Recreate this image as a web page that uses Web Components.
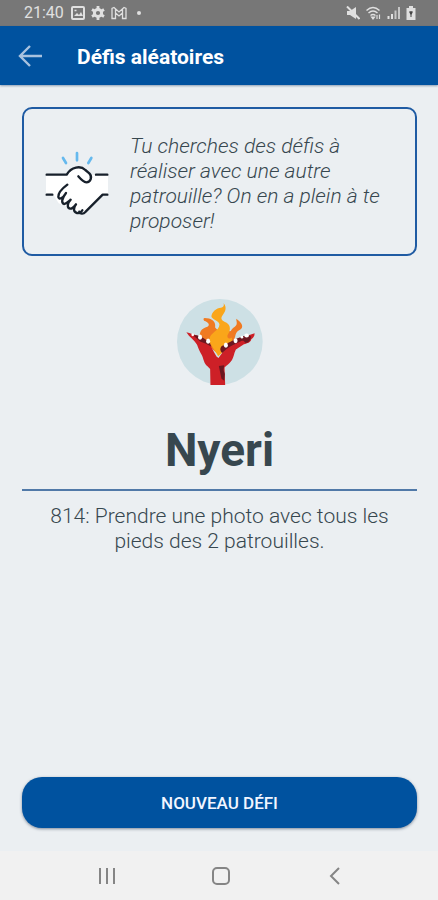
<!DOCTYPE html>
<html lang="fr">
<head>
<meta charset="utf-8">
<meta name="viewport" content="width=device-width, initial-scale=1">
<title>Défis aléatoires</title>
<style>
  body {
    margin: 0;
    font-family: Roboto, "Liberation Sans", sans-serif;
    --blue: #00529f;
    --page: #ebeff2;
    --ink: #37474f;
  }
</style>
</head>
<body>
<challenge-app></challenge-app>

<script>
class StatusBar extends HTMLElement {
  constructor() {
    super();
    this.attachShadow({ mode: "open" });
  }

  connectedCallback() {
    this.shadowRoot.innerHTML = `
      <style>
        :host {
          display: flex;
          justify-content: space-between;
          align-items: center;
          height: 26px;
          padding: 0 22px 0 24px;
          background: #777;
          color: #e0e0e0;
        }

        div {
          display: flex;
          align-items: center;
          gap: 6px;
        }

        time {
          font-size: 16px;
          line-height: 20px;
          margin-right: 1px;
        }

        svg {
          display: block;
        }
      </style>
      <div>
        <time>${this.getAttribute("time")}</time>
        <svg width="14" height="14" viewBox="0 0 14 14" fill="none" stroke="currentColor" stroke-width="2">
          <rect x="1" y="1" width="12" height="12" rx="1"/>
          <path d="M3 10l3-3 2 2 2-3 2 4z" fill="currentColor" stroke="none"/>
          <path d="M3.500 4.500h2" stroke-width="1.500"/>
        </svg>
        <svg width="14" height="14" viewBox="0 0 14 14" fill="none" stroke="currentColor">
          <circle cx="7" cy="7" r="3.600" stroke-width="3"/>
          <path d="M7 0v3M7 11v3M1 3.500l2.500 1.500M10.500 9l2.500 1.500M1 10.500L3.500 9M10.500 5L13 3.500" stroke-width="2.800"/>
        </svg>
        <svg width="16" height="14" viewBox="0 0 16 14" fill="none" stroke="currentColor" stroke-width="1.300">
          <path d="M1 12.500V2.500l2-1 5 4.500 5-4.500 2 1v10h-3.500V7L8 10 4.500 7v5.500zM4.500 7V3M11.500 7V3"/>
        </svg>
        <svg width="12" height="14" viewBox="0 0 12 14" fill="currentColor"><circle cx="6" cy="7" r="2"/></svg>
      </div>
      <div>
        <svg width="14" height="14" viewBox="0 0 14 14" fill="currentColor">
          <path d="M1 5h3l6-4v12l-6-4H1z"/>
          <path d="M1 .5l12.500 12.500" stroke="currentColor" stroke-width="2"/>
        </svg>
        <svg width="15" height="14" viewBox="0 0 15 14" fill="none" stroke="currentColor" stroke-width="1.500">
          <path d="M.5 4.500q6.500-6 13 0M2.500 7q4.500-4 9 0M4.500 9.500q2.500-2 5 0"/>
          <path d="M5.500 11L7 13l1.500-2zM11 13V9M13.500 8.500V13" fill="currentColor" stroke-width="1.200"/>
        </svg>
        <svg width="13" height="14" viewBox="0 0 13 14" fill="none" stroke="currentColor" stroke-width="2">
          <path d="M1.500 13v-3M5 13V8" />
          <path d="M8.500 13V4.500M12 13V1" opacity=".75"/>
        </svg>
        <svg width="10" height="14" viewBox="0 0 10 14">
          <path d="M3 0h4v2h2.500v12H.5V2H3z" fill="currentColor"/>
          <path d="M3 5.500h4L5 10zM4.500 5h1v6h-1z" fill="#444"/>
        </svg>
      </div>
    `;
  }
}

class AppBar extends HTMLElement {
  constructor() {
    super();
    this.attachShadow({ mode: "open" });
  }

  connectedCallback() {
    this.shadowRoot.innerHTML = `
      <style>
        :host {
          display: flex;
          align-items: center;
          gap: 32px;
          height: 59px;
          padding: 0 16px;
          background: var(--blue);
          color: #fff;
          box-shadow: 0 1px 2px rgba(0, 40, 90, 0.4);
        }

        button {
          padding: 0;
          border: 0;
          background: none;
          color: #a8c2df;
        }

        svg {
          display: block;
        }

        h1 {
          margin: 0;
          padding-top: 2px;
          font-size: 21px;
          line-height: 28px;
          font-weight: 700;
        }
      </style>
      <button type="button" aria-label="Retour">
        <svg width="29" height="26" viewBox="0 0 29 26" fill="none" stroke="currentColor" stroke-width="2.400">
          <path d="M26 13H4M14 3L4 13l10 10"/>
        </svg>
      </button>
      <h1><slot></slot></h1>
    `;
  }
}

class IntroCard extends HTMLElement {
  constructor() {
    super();
    this.attachShadow({ mode: "open" });
  }

  connectedCallback() {
    this.shadowRoot.innerHTML = `
      <style>
        :host {
          display: flex;
          align-items: center;
          gap: 21px;
          padding: 25px 21px 20px;
          border: 2px solid #1f5ba3;
          border-radius: 10px;
          color: var(--ink);
        }

        svg {
          flex: none;
        }

        p {
          flex: 1;
          margin: 0;
          font-size: 21px;
          line-height: 25px;
          font-style: italic;
          font-weight: 300;
        }
      </style>
      <svg width="64" height="66" viewBox="15 27 192 198" fill="none" stroke-width="7" stroke-linecap="round" aria-hidden="true">
        <path d="M18 98h64q28-42 62-8l10 8h50v60h-18l-56 56-74-30-16-26H18z" fill="#fff"/>
        <g stroke="#17202b" stroke-linejoin="round">
          <path d="M20 98h60c14-24 42-28 56-14l12 10c10 10 4 27-9 27-9-1-16-9-24-18"/>
          <path d="M168 98h34M20 158h17M202 158h-14l-51 51c-8 9-16 7-19 0"/>
          <path d="M82 128c-16 12-28 26-27 37 2 8 12 6 23-12-14 18-14 30-6 33 7 1 12-6 20-13-10 10-12 25-2 27 8 1 12-5 18-13-8 10-9 23 3 26 7 2 12-2 16-8"/>
        </g>
        <path d="M111 33v22M69 48l9 15M154 48l-9 15" stroke="#65b9ee" stroke-width="8"/>
      </svg>
      <p><slot></slot></p>
    `;
  }
}

class ChallengeView extends HTMLElement {
  constructor() {
    super();
    this.attachShadow({ mode: "open" });
  }

  connectedCallback() {
    this.shadowRoot.innerHTML = `
      <style>
        :host {
          display: flex;
          flex-direction: column;
          align-items: center;
          color: var(--ink);
          text-align: center;
        }

        h2 {
          align-self: stretch;
          margin: 37px 0 0;
          padding-bottom: 11px;
          border-bottom: 2px solid #5079a8;
          font-size: 46px;
          line-height: 56px;
          font-weight: 700;
        }

        p {
          margin: 13px 16px 0;
          font-size: 21px;
          line-height: 25px;
          font-weight: 300;
        }
      </style>
      <svg width="86" height="86" viewBox="35 39 257 257" aria-hidden="true">
        <circle cx="163" cy="167" r="128" fill="#cde0e5"/>
        <path d="M106 160c-8-22 2-33 20-38 9-6 2-14-10-18-3-4-2-8 2-8 18 0 34 8 31 28l14 15 33-4c4-10 13-12 17-20 2-6-1-10-1-17 17 11 25 26 10 34-16 8-10 20-18 31l-46 40z" fill="#f07a22"/>
        <path d="M158 210c-10-20-26-37-26-51 1-20 29-24 30-44-2-10-15-11-24-22-1-16 16-27 28-28 10-2 10-8 8-14 14 17 1 31-5 40-4 9 2 13 13 18 15 9 13 24 5 36-5 10 5 16 12 9 3 20-24 40-41 56z" fill="#faa61a"/>
        <path d="M63 138c12 4 22 5 34 12 12 4 22 11 32 18 8 12 15 28 24 43l6 4 12-16c5-9 12-16 24-22 16-9 35-22 52-29l20-7c0 10-5 14-10 18-2 10-12 12-22 15l-24 16c-7 14-6 25-15 36-6 8-13 12-19 18l2 53h-44l-1-49-8-8c-10-7-12-24-17-34-6-9-10-19-14-30-8-15-23-23-32-38z" fill="#cd2027"/>
        <path d="M84 148c8-2 16 0 24 4l24 16 6 14-16-9-18-7zM170 200c-6-6-8-13-2-20 14-8 30-14 46-23l32-12 10 6c0 10-8 22-18 18-2-5-7-6-12-4-14 8-30 12-44 24zM160 239l16-2-2 14 4 12-2 20-8-6-4-18z" fill="#6c1720"/>
        <g fill="#fff">
          <ellipse cx="104" cy="153" rx="6" ry="8"/>
          <ellipse cx="128" cy="165" rx="6" ry="8"/>
          <ellipse cx="181" cy="177" rx="6" ry="8"/>
          <ellipse cx="210" cy="164" rx="6" ry="7"/>
          <ellipse cx="243" cy="148" rx="7" ry="6"/>
          <circle cx="82" cy="146" r="4"/>
          <circle cx="229" cy="153" r="4"/>
        </g>
      </svg>
      <h2><slot name="team"></slot></h2>
      <p><slot></slot></p>
    `;
  }
}

class ActionButton extends HTMLElement {
  constructor() {
    super();
    this.attachShadow({ mode: "open" });
  }

  connectedCallback() {
    this.shadowRoot.innerHTML = `
      <style>
        :host {
          display: block;
        }

        button {
          width: 100%;
          height: 51px;
          border: 0;
          border-radius: 20px;
          background: var(--blue);
          box-shadow: 0 1px 3px rgba(20, 40, 70, 0.5);
          color: #f2f6ff;
          font: 500 17px/20px Roboto, "Liberation Sans", sans-serif;
          text-transform: uppercase;
        }
      </style>
      <button type="button"><slot></slot></button>
    `;
  }
}

class SystemNav extends HTMLElement {
  constructor() {
    super();
    this.attachShadow({ mode: "open" });
  }

  connectedCallback() {
    this.shadowRoot.innerHTML = `
      <style>
        :host {
          display: flex;
          justify-content: center;
          gap: 94px;
          align-items: center;
          height: 49px;
          padding-left: 4px;
          background: #f1f1f1;
        }

        button {
          padding: 0;
          border: 0;
          background: none;
          color: #858585;
        }

        svg {
          display: block;
          fill: none;
          stroke: currentColor;
          stroke-width: 2;
        }
      </style>
      <button type="button" aria-label="Applications récentes">
        <svg width="20" height="20" viewBox="0 0 20 20"><path d="M3 2v16M10 2v16M17 2v16"/></svg>
      </button>
      <button type="button" aria-label="Accueil">
        <svg width="20" height="20" viewBox="0 0 20 20"><rect x="2" y="2" width="16" height="16" rx="4"/></svg>
      </button>
      <button type="button" aria-label="Précédent">
        <svg width="20" height="20" viewBox="0 0 20 20"><path d="M14 2L6 10l8 8"/></svg>
      </button>
    `;
  }
}

class ChallengeApp extends HTMLElement {
  constructor() {
    super();
    this.attachShadow({ mode: "open" });
  }

  connectedCallback() {
    this.shadowRoot.innerHTML = `
      <style>
        :host {
          display: flex;
          flex-direction: column;
          min-height: 100vh;
          background: var(--page);
        }

        main {
          flex: 1;
          display: flex;
          flex-direction: column;
          padding: 22px 21px 23px 22px;
        }

        challenge-view {
          margin: 43px 0 24px;
        }

        action-button {
          margin-top: auto;
        }
      </style>
      <status-bar time="21:40"></status-bar>
      <app-bar>Défis aléatoires</app-bar>
      <main>
        <intro-card>Tu cherches des défis à réaliser avec une autre patrouille? On en a plein à te proposer!</intro-card>
        <challenge-view>
          <span slot="team">Nyeri</span>
          814: Prendre une photo avec tous les pieds des 2 patrouilles.
        </challenge-view>
        <action-button>Nouveau défi</action-button>
      </main>
      <system-nav></system-nav>
    `;
  }
}

customElements.define("status-bar", StatusBar);
customElements.define("app-bar", AppBar);
customElements.define("intro-card", IntroCard);
customElements.define("challenge-view", ChallengeView);
customElements.define("action-button", ActionButton);
customElements.define("system-nav", SystemNav);
customElements.define("challenge-app", ChallengeApp);
</script>
</body>
</html>
